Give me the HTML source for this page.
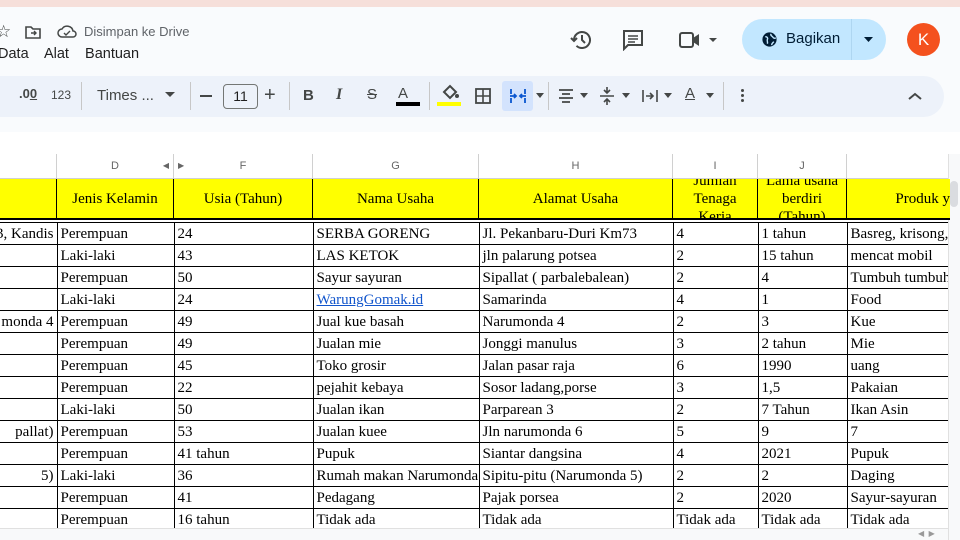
<!DOCTYPE html>
<html><head><meta charset="utf-8"><style>
*{margin:0;padding:0;box-sizing:border-box}
body{width:960px;height:540px;overflow:hidden;background:#fff;font-family:"Liberation Sans",sans-serif;position:relative}
.abs{position:absolute}
.ui{color:#444746;font-size:14px}
table{border-collapse:collapse;position:absolute;left:0;top:222px;width:950px;table-layout:fixed;font-family:"Liberation Serif",serif;font-size:15px;color:#000}
td{height:22px;border:1.5px solid #000;padding:0 3px;white-space:nowrap;overflow:hidden;line-height:20px}
.r{display:flex;justify-content:flex-end;white-space:nowrap}
.hdr{position:absolute;top:154px;height:25px;border-right:1px solid #d0d0d0;border-bottom:1px solid #d0d0d0;color:#666;font-size:11px;text-align:center;line-height:24px;background:#fff}
.yel{position:absolute;top:179px;height:41px;background:#ffff00;border-right:1.5px solid #000;font-family:"Liberation Serif",serif;font-size:15px;text-align:center;display:flex;align-items:center;justify-content:center;line-height:18px;overflow:hidden;border-bottom:2px solid #000;z-index:2}
</style></head><body>
<div class="abs" style="left:0;top:0;width:960px;height:7px;background:#f6dfda"></div>
<div class="abs" style="left:0;top:7px;width:960px;height:125px;background:#f9fbfd"></div>
<div class="abs ui" style="left:-4px;top:22px;font-size:17px">☆</div>
<svg class="abs" style="left:24px;top:24px" width="18" height="16" viewBox="0 0 18 16"><path d="M2 3h5l2 2h7v9H2z" fill="none" stroke="#444746" stroke-width="1.6"/><path d="M7 9h5M10 7l2 2-2 2" fill="none" stroke="#444746" stroke-width="1.4"/></svg>
<svg class="abs" style="left:57px;top:24px" width="20" height="16" viewBox="0 0 20 16"><path d="M5 13a4 4 0 0 1 0-8 6 6 0 0 1 11 2 3 3 0 0 1 0 6z" fill="none" stroke="#444746" stroke-width="1.5"/><path d="M7 9l2 2 4-4" fill="none" stroke="#444746" stroke-width="1.4"/></svg>
<div class="abs ui" style="left:84px;top:24px;font-size:13px;color:#5f6368">Disimpan ke Drive</div>
<div class="abs ui" style="left:-2px;top:46px;font-size:14.5px;color:#1f1f1f">Data&nbsp;&nbsp;&nbsp; Alat&nbsp;&nbsp;&nbsp; Bantuan</div>
<svg class="abs" style="left:570px;top:28px" width="24" height="24" viewBox="0 0 24 24"><path d="M4 12a8 8 0 1 1 2.5 5.8" fill="none" stroke="#444746" stroke-width="2"/><path d="M1 10l3 3 3-3" fill="none" stroke="#444746" stroke-width="2"/><path d="M12 7v5l3 3" fill="none" stroke="#444746" stroke-width="2"/></svg>
<svg class="abs" style="left:622px;top:29px" width="22" height="22" viewBox="0 0 22 22"><path d="M2 2h18v14H6l-4 4z" fill="none" stroke="#444746" stroke-width="2"/><path d="M6 7h10M6 10h10M6 13h7" stroke="#444746" stroke-width="1.6"/></svg>
<svg class="abs" style="left:678px;top:31px" width="42" height="18" viewBox="0 0 42 18"><rect x="2" y="2" width="13" height="14" rx="2" fill="none" stroke="#444746" stroke-width="2"/><path d="M15 7l6-4v12l-6-4z" fill="#444746"/><path d="M31 7h8l-4 4z" fill="#444746"/></svg>
<div class="abs" style="left:742px;top:19px;width:144px;height:41px;border-radius:21px;background:#c2e7ff"></div>
<div class="abs" style="left:851px;top:19px;width:1px;height:41px;background:#aed6f1"></div>
<svg class="abs" style="left:761px;top:31px" width="17" height="17" viewBox="0 0 24 24"><circle cx="12" cy="12" r="10" fill="#001d35"/><path d="M6 8c3 0 4 2 3 4s1 3 0 6M14 4c-1 3 2 3 3 5s3 1 4 1M15 20c0-3 2-3 3-5" fill="none" stroke="#c2e7ff" stroke-width="2"/></svg>
<div class="abs" style="left:786px;top:30px;font-size:15px;color:#001d35">Bagikan</div>
<svg class="abs" style="left:863px;top:36px" width="12" height="8"><path d="M1 1h9l-4.5 5z" fill="#001d35"/></svg>
<div class="abs" style="left:907px;top:23px;width:33px;height:33px;border-radius:50%;background:#f4511e;color:#fff;font-size:17px;text-align:center;line-height:33px">K</div>
<div class="abs" style="left:-30px;top:76px;width:974px;height:41px;border-radius:21px;background:#edf2fa"></div>
<div class="abs ui" style="left:-4px;top:87px;font-size:14px">.</div>
<div class="abs" style="left:19px;top:86px;font-size:13px;color:#444746;font-weight:bold">.0<u>0</u></div>
<div class="abs" style="left:51px;top:88px;font-size:12px;color:#444746">123</div>
<div class="abs" style="left:81px;top:82px;width:1px;height:28px;background:#c7c7c7"></div>
<div class="abs" style="left:97px;top:87px;font-size:15px;color:#444746">Times ...</div>
<svg class="abs" style="left:165px;top:92px" width="11" height="7"><path d="M0 0h10l-5 5z" fill="#444746"/></svg>
<div class="abs" style="left:190px;top:82px;width:1px;height:28px;background:#c7c7c7"></div>
<div class="abs" style="left:200px;top:95px;width:12px;height:2px;background:#444746"></div>
<div class="abs" style="left:223px;top:84px;width:35px;height:25px;border:1px solid #747775;border-radius:4px;font-size:14px;color:#1f1f1f;text-align:center;line-height:23px">11</div>
<div class="abs" style="left:264px;top:84px;font-size:20px;color:#444746">+</div>
<div class="abs" style="left:289px;top:82px;width:1px;height:28px;background:#c7c7c7"></div>
<div class="abs" style="left:303px;top:87px;font-size:15px;font-weight:bold;color:#444746">B</div>
<div class="abs" style="left:336px;top:86px;font-size:16px;font-style:italic;font-family:'Liberation Serif',serif;font-weight:bold;color:#444746">I</div>
<div class="abs" style="left:367px;top:86px;font-size:15px;color:#444746;text-decoration:line-through">S</div>
<div class="abs" style="left:398px;top:85px;font-size:15px;color:#444746">A</div>
<div class="abs" style="left:396px;top:102px;width:24px;height:4px;background:#000"></div>
<div class="abs" style="left:429px;top:82px;width:1px;height:28px;background:#c7c7c7"></div>
<svg class="abs" style="left:440px;top:84px" width="20" height="16" viewBox="0 0 20 16"><path d="M4 8l6-6 6 6-6 6z" fill="none" stroke="#444746" stroke-width="2"/><circle cx="17" cy="12" r="2" fill="#444746"/></svg>
<div class="abs" style="left:437px;top:102px;width:24px;height:4px;background:#ffff00"></div>
<svg class="abs" style="left:475px;top:88px" width="16" height="16"><rect x="1" y="1" width="14" height="14" fill="none" stroke="#444746" stroke-width="1.8"/><path d="M8 1v14M1 8h14" stroke="#444746" stroke-width="1.6"/></svg>
<div class="abs" style="left:502px;top:81px;width:31px;height:30px;background:#d3e3fd;border-radius:3px"></div>
<svg class="abs" style="left:509px;top:88px" width="18" height="16" viewBox="0 0 18 16"><path d="M2 1v5M16 1v5M2 10v5M16 10v5M1 8h6M11 8h6M5 6l2 2-2 2M13 6l-2 2 2 2" fill="none" stroke="#0b57d0" stroke-width="1.8"/></svg>
<svg class="abs" style="left:536px;top:93px" width="9" height="6"><path d="M0 0h8l-4 5z" fill="#444746"/></svg>
<div class="abs" style="left:548px;top:82px;width:1px;height:28px;background:#c7c7c7"></div>
<svg class="abs" style="left:558px;top:88px" width="16" height="16"><path d="M1 2h14M4 6h8M1 10h14M4 14h8" stroke="#444746" stroke-width="1.8"/></svg>
<svg class="abs" style="left:580px;top:93px" width="9" height="6"><path d="M0 0h8l-4 5z" fill="#444746"/></svg>
<svg class="abs" style="left:599px;top:86px" width="16" height="20"><path d="M1 10h14M8 1v6M8 13v6M5 4l3 3 3-3M5 16l3-3 3 3" fill="none" stroke="#444746" stroke-width="1.6"/></svg>
<svg class="abs" style="left:622px;top:93px" width="9" height="6"><path d="M0 0h8l-4 5z" fill="#444746"/></svg>
<svg class="abs" style="left:642px;top:89px" width="16" height="14"><path d="M1 1v12M15 1v12M4 7h7M8 4l3 3-3 3" fill="none" stroke="#444746" stroke-width="1.6"/></svg>
<svg class="abs" style="left:664px;top:93px" width="9" height="6"><path d="M0 0h8l-4 5z" fill="#444746"/></svg>
<div class="abs" style="left:685px;top:85px;font-size:15px;color:#444746;text-decoration:underline">A</div>
<svg class="abs" style="left:706px;top:93px" width="9" height="6"><path d="M0 0h8l-4 5z" fill="#444746"/></svg>
<div class="abs" style="left:723px;top:82px;width:1px;height:28px;background:#c7c7c7"></div>
<div class="abs" style="left:741px;top:89px;width:3px;height:3px;background:#444746;border-radius:50%;box-shadow:0 5px 0 #444746,0 10px 0 #444746"></div>
<svg class="abs" style="left:908px;top:92px" width="14" height="9"><path d="M1 7l6-5 6 5" fill="none" stroke="#444746" stroke-width="2"/></svg>
<div class="hdr" style="left:0;width:57px"></div>
<div class="hdr" style="left:57px;width:117px">D<span style="position:absolute;right:4px;font-size:8px">◀</span></div>
<div class="hdr" style="left:174px;width:139px"><span style="position:absolute;left:4px;font-size:8px">▶</span>F</div>
<div class="hdr" style="left:313px;width:166px">G</div>
<div class="hdr" style="left:479px;width:194px">H</div>
<div class="hdr" style="left:673px;width:85px">I</div>
<div class="hdr" style="left:758px;width:89px">J</div>
<div class="hdr" style="left:847px;width:103px"></div>
<div class="yel" style="left:0;width:57px"></div>
<div class="yel" style="left:57px;width:117px">Jenis Kelamin</div>
<div class="yel" style="left:174px;width:139px">Usia (Tahun)</div>
<div class="yel" style="left:313px;width:166px">Nama Usaha</div>
<div class="yel" style="left:479px;width:194px">Alamat Usaha</div>
<div class="yel" style="left:673px;width:85px">Jumlah<br>Tenaga<br>Kerja</div>
<div class="yel" style="left:758px;width:89px">Lama usaha<br>berdiri<br>(Tahun)</div>
<div class="yel" style="left:847px;width:103px;justify-content:flex-end;border-right:none">Produk y</div>
<table>
<colgroup><col style="width:57px"><col style="width:117px"><col style="width:139px"><col style="width:166px"><col style="width:194px"><col style="width:85px"><col style="width:89px"><col style="width:103px"></colgroup>
<tr><td style="border-left:none"><div class="r">3, Kandis</div></td><td>Perempuan</td><td>24</td><td>SERBA GORENG</td><td>Jl. Pekanbaru-Duri Km73</td><td>4</td><td>1 tahun</td><td>Basreg, krisong,</td></tr>
<tr><td style="border-left:none"></td><td>Laki-laki</td><td>43</td><td>LAS KETOK</td><td>jln palarung potsea</td><td>2</td><td>15 tahun</td><td>mencat mobil</td></tr>
<tr><td style="border-left:none"></td><td>Perempuan</td><td>50</td><td>Sayur sayuran</td><td>Sipallat ( parbalebalean)</td><td>2</td><td>4</td><td>Tumbuh tumbuh</td></tr>
<tr><td style="border-left:none"></td><td>Laki-laki</td><td>24</td><td style="color:#1155cc;text-decoration:underline">WarungGomak.id</td><td>Samarinda</td><td>4</td><td>1</td><td>Food</td></tr>
<tr><td style="border-left:none"><div class="r">monda 4</div></td><td>Perempuan</td><td>49</td><td>Jual kue basah</td><td>Narumonda 4</td><td>2</td><td>3</td><td>Kue</td></tr>
<tr><td style="border-left:none"></td><td>Perempuan</td><td>49</td><td>Jualan mie</td><td>Jonggi manulus</td><td>3</td><td>2 tahun</td><td>Mie</td></tr>
<tr><td style="border-left:none"></td><td>Perempuan</td><td>45</td><td>Toko grosir</td><td>Jalan pasar raja</td><td>6</td><td>1990</td><td>uang</td></tr>
<tr><td style="border-left:none"></td><td>Perempuan</td><td>22</td><td>pejahit kebaya</td><td>Sosor ladang,porse</td><td>3</td><td>1,5</td><td>Pakaian</td></tr>
<tr><td style="border-left:none"></td><td>Laki-laki</td><td>50</td><td>Jualan ikan</td><td>Parparean 3</td><td>2</td><td>7 Tahun</td><td>Ikan Asin</td></tr>
<tr><td style="border-left:none"><div class="r">pallat)</div></td><td>Perempuan</td><td>53</td><td>Jualan kuee</td><td>Jln narumonda 6</td><td>5</td><td>9</td><td>7</td></tr>
<tr><td style="border-left:none"></td><td>Perempuan</td><td>41 tahun</td><td>Pupuk</td><td>Siantar dangsina</td><td>4</td><td>2021</td><td>Pupuk</td></tr>
<tr><td style="border-left:none"><div class="r">5)</div></td><td>Laki-laki</td><td>36</td><td>Rumah makan Narumonda</td><td>Sipitu-pitu (Narumonda 5)</td><td>2</td><td>2</td><td>Daging</td></tr>
<tr><td style="border-left:none"></td><td>Perempuan</td><td>41</td><td>Pedagang</td><td>Pajak porsea</td><td>2</td><td>2020</td><td>Sayur-sayuran</td></tr>
<tr><td style="border-left:none"></td><td>Perempuan</td><td>16 tahun</td><td>Tidak ada</td><td>Tidak ada</td><td>Tidak ada</td><td>Tidak ada</td><td>Tidak ada</td></tr>
</table>
<div class="abs" style="left:948px;top:154px;width:12px;height:386px;background:#f8f9fa;border-left:1px solid #e0e0e0"></div>
<div class="abs" style="left:950px;top:181px;width:8px;height:26px;background:#dadce0;border-radius:4px"></div>
<div class="abs" style="left:0;top:528px;width:948px;height:12px;background:#f8f9fa;border-top:1px solid #e0e0e0"></div>
<div class="abs" style="left:918px;top:529px;font-size:8px;color:#999">◀&nbsp; ▶</div>
</body></html>
